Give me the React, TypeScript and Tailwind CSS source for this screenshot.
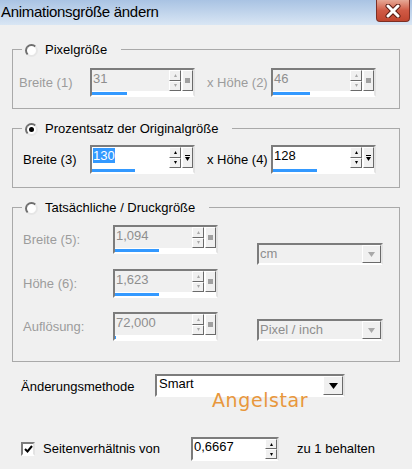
import React from "react";

const raised =
  "border border-t-white border-l-white border-r-[#6a6a6a] border-b-[#6a6a6a] bg-[#f0f0f0]";
const sunken =
  "border-2 border-t-[#7c7c7c] border-l-[#7c7c7c] border-r-[#e3e3e3] border-b-white";

const Arrow = ({ up = false, color = "#000", w = 5 }: { up?: boolean; color?: string; w?: number }) => (
  <svg width={w} height={Math.ceil(w / 2) + 1} viewBox={`0 0 ${w} ${Math.ceil(w / 2) + 1}`}>
    {up ? (
      <polygon points={`0,${Math.ceil(w / 2) + 1} ${w},${Math.ceil(w / 2) + 1} ${w / 2},0`} fill={color} />
    ) : (
      <polygon points={`0,0 ${w},0 ${w / 2},${Math.ceil(w / 2) + 1}`} fill={color} />
    )}
  </svg>
);

interface SpinProps {
  value: string;
  disabled?: boolean;
  bar?: number;
  selected?: boolean;
  slider?: boolean;
}

const Spin = ({ value, disabled, bar, selected, slider = true }: SpinProps) => {
  const arrowColor = disabled ? "#a8a8a8" : "#000";
  return (
    <div className={`flex flex-col w-[105px] h-[29px] ${sunken} bg-white`}>
      <div className="flex flex-1 min-h-0">
        <div
          className={`flex-1 pl-[1px] pt-[1px] leading-[15px] ${
            disabled ? "bg-[#f0f0f0] text-[#8e8e8e]" : "bg-white text-black"
          }`}
        >
          {selected ? <span className="bg-[#3399ff] text-white">{value}</span> : value}
        </div>
        <div className="flex flex-col w-[12px] bg-[#f0f0f0]">
          <div className={`flex-1 flex items-center justify-center ${raised}`}>
            <Arrow up color={arrowColor} w={3} />
          </div>
          <div className={`flex-1 flex items-center justify-center ${raised}`}>
            <Arrow color={arrowColor} w={3} />
          </div>
        </div>
        {slider && (
          <div className={`w-[11px] ml-[1px] flex flex-col items-center justify-center gap-[1px] ${raised}`}>
            {disabled ? (
              <span className="w-[5px] h-[5px] bg-[#a0a0a0]" />
            ) : (
              <>
                <span className="w-[5px] h-[1px] bg-black" />
                <Arrow w={5} />
              </>
            )}
          </div>
        )}
      </div>
      <div className="h-[4px] bg-white flex items-end">
        <div className="h-[3px] bg-[#3399ff]" style={{ width: bar ?? 0 }} />
      </div>
    </div>
  );
};

const Radio = ({ checked }: { checked?: boolean }) => (
  <span className="w-[13px] h-[13px] rounded-full border-2 border-t-[#6e6e6e] border-l-[#6e6e6e] border-r-[#e6e6e6] border-b-[#e6e6e6] bg-white flex items-center justify-center">
    {checked && <span className="w-[5px] h-[5px] rounded-full bg-black" />}
  </span>
);

const Group = ({
  title,
  checked,
  className,
  children,
}: {
  title: string;
  checked?: boolean;
  className: string;
  children: React.ReactNode;
}) => (
  <div className={`relative border border-[#a9a9a9] ${className}`}>
    <div className="absolute left-[9px] -top-[8px] h-[16px] px-[3px] bg-[#f0f0f0] flex items-center gap-[7px] pr-[14px]">
      <Radio checked={checked} />
      <span className="leading-[16px]">{title}</span>
    </div>
    {children}
  </div>
);

const Dropdown = ({ value }: { value: string }) => (
  <div className={`flex w-[126px] h-[22px] ${sunken} bg-[#f0f0f0]`}>
    <span className="flex-1 pl-[1px] pt-[1px] leading-[15px] text-[#8e8e8e]">{value}</span>
    <span className={`w-[19px] flex items-center justify-center ${raised}`}>
      <Arrow w={7} color="#a8a8a8" />
    </span>
  </div>
);

const App = () => {
  return (
    <div className="w-[412px] h-[469px] bg-[#f0f0f0] overflow-hidden font-['Liberation_Sans',Arial,sans-serif] text-[13px] text-black">
      <div className="h-[25px] flex items-start justify-between bg-linear-to-b from-[#a9c3e3] to-[#d9e6f4]">
        <span className="pl-[1px] text-[15px] leading-[24px] tracking-[-0.3px]">Animationsgröße ändern</span>
        <div className="mr-[2px] w-[34px] h-[22px] rounded-b-[4px] border border-t-0 border-[#7d2f24] bg-linear-to-b from-[#e6a896] via-[#cf5a45] to-[#c0452f] flex items-center justify-center">
          <svg width="16" height="14" viewBox="0 0 16 14">
            <path
              d="M3 2 L13 12 M13 2 L3 12"
              stroke="#5a1d14"
              strokeWidth="5"
              strokeLinecap="round"
            />
            <path d="M3 2 L13 12 M13 2 L3 12" stroke="#fff" strokeWidth="3" strokeLinecap="round" />
          </svg>
        </div>
      </div>

      <div className="px-[12px] pt-[24px]">
        <Group title="Pixelgröße" className="h-[60px]">
          <div className="flex items-center pt-[18px] pl-[6px] text-[#9c9c9c]">
            <span className="w-[71px]">Breite (1)</span>
            <Spin value="31" disabled bar={35} />
            <span className="w-[76px] pl-[12px]">x Höhe (2)</span>
            <Spin value="46" disabled bar={37} />
          </div>
        </Group>

        <Group title="Prozentsatz der Originalgröße" checked className="h-[60px] mt-[19px]">
          <div className="flex items-center pt-[16px] pl-[10px]">
            <span className="w-[67px]">Breite (3)</span>
            <Spin value="130" selected bar={43} />
            <span className="w-[76px] pl-[12px]">x Höhe (4)</span>
            <Spin value="128" bar={44} />
          </div>
        </Group>

        <Group title="Tatsächliche / Druckgröße" className="h-[155px] mt-[19px]">
          <div className="flex pt-[17px] pl-[10px] text-[#9c9c9c]">
            <div className="flex flex-col">
              <div className="flex items-center">
                <span className="w-[90px]">Breite (5):</span>
                <Spin value="1,094" disabled bar={44} />
              </div>
              <div className="flex items-center mt-[15px]">
                <span className="w-[90px]">Höhe (6):</span>
                <Spin value="1,623" disabled bar={44} />
              </div>
              <div className="flex items-center mt-[14px]">
                <span className="w-[90px]">Auflösung:</span>
                <Spin value="72,000" disabled bar={1} />
              </div>
            </div>
            <div className="flex flex-col ml-[39px] pt-[18px]">
              <Dropdown value="cm" />
              <div className="mt-[54px]">
                <Dropdown value="Pixel / inch" />
              </div>
            </div>
          </div>
        </Group>

        <div className="relative flex items-center mt-[12px] pl-[9px]">
          <span className="w-[134px] pt-[2px]">Änderungsmethode</span>
          <div className={`flex w-[190px] h-[23px] ${sunken} bg-white`}>
            <span className="flex-1 pl-[2px] leading-[16px]">Smart</span>
            <span className={`w-[20px] flex items-center justify-center ${raised}`}>
              <Arrow w={9} />
            </span>
          </div>
          <span className="absolute left-[200px] top-[15px] text-[19px] leading-[22px] tracking-[0.6px] text-[#e8973c] font-['Comic_Sans_MS','DejaVu_Sans',sans-serif]">
            Angelstar
          </span>
        </div>

        <div className="flex items-center mt-[40px] pl-[9px]">
          <span className={`w-[14px] h-[14px] ${sunken} bg-white flex items-center justify-center`}>
            <svg width="9" height="8" viewBox="0 0 9 8">
              <path d="M1 4 L3.5 6.5 L8 1" fill="none" stroke="#000" strokeWidth="2" />
            </svg>
          </span>
          <span className="ml-[8px] w-[148px]">Seitenverhältnis von</span>
          <div className={`flex w-[88px] h-[24px] ${sunken} bg-white`}>
            <span className="flex-1 pl-[1px] leading-[16px]">0,6667</span>
            <div className="flex flex-col w-[12px]">
              <div className={`flex-1 flex items-center justify-center ${raised}`}>
                <Arrow up w={3} />
              </div>
              <div className={`flex-1 flex items-center justify-center ${raised}`}>
                <Arrow w={3} />
              </div>
            </div>
          </div>
          <span className="ml-[18px]">zu 1 behalten</span>
        </div>
      </div>
    </div>
  );
};

export default App;
